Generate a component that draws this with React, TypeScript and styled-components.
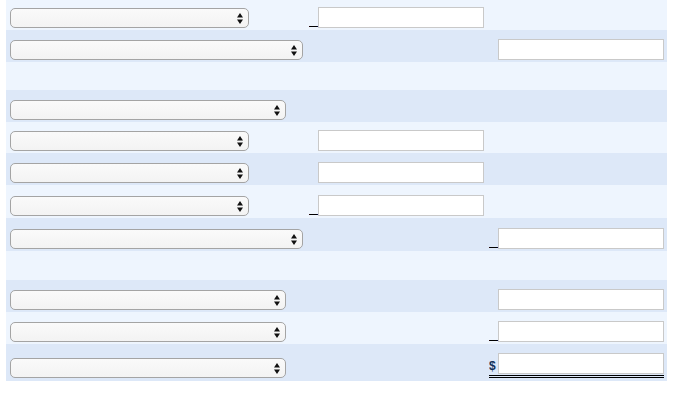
import React from "react";
import styled, { createGlobalStyle } from "styled-components";

const GlobalStyle = createGlobalStyle`
  body {
    margin: 0;
    padding: 0 6px;
    background: #ffffff;
    font-family: "Liberation Sans", Arial, sans-serif;
    font-size: 12px;
    color: #000;
  }
`;

const Table = styled.div`
  width: 661px;
  display: flex;
  flex-direction: column;
`;

const Row = styled.div<{ $alt: boolean; $h: number; $pad: number }>`
  display: grid;
  grid-template-columns: 303px 180px 178px;
  height: ${(p) => p.$h}px;
  box-sizing: border-box;
  padding-bottom: ${(p) => p.$pad}px;
  background: ${(p) => (p.$alt ? "#dde8f8" : "#eef5fe")};
`;

const Cell = styled.div`
  display: flex;
  align-items: flex-end;
`;

const SelectCell = styled(Cell)`
  padding-left: 4px;
`;

const AmountCell = styled.div<{ $total?: boolean }>`
  display: flex;
  align-items: flex-end;
  width: ${(p) => (p.$total ? "175px" : "auto")};
  border-bottom: ${(p) => (p.$total ? "3px double #000" : "none")};
  padding-bottom: ${(p) => (p.$total ? "1px" : "0")};
  align-self: flex-end;
`;

const SelectBox = styled.div<{ $w: number }>`
  width: ${(p) => p.$w}px;
  height: 20px;
  box-sizing: border-box;
  border: 1px solid #a4a4a4;
  border-radius: 5px;
  background: linear-gradient(#fafafa, #f3f3f3);
  display: flex;
  align-items: center;
  justify-content: flex-end;
  padding-right: 5px;
`;

const Mark = styled.span<{ $bold?: boolean }>`
  width: 9px;
  flex: none;
  font-size: ${(p) => (p.$bold ? "12px" : "16px")};
  font-weight: ${(p) => (p.$bold ? 700 : 400)};
  line-height: 1;
  color: ${(p) => (p.$bold ? "#12305a" : "#000")};
  margin-bottom: ${(p) => (p.$bold ? "2px" : "1px")};
  overflow: hidden;
`;

const TextBox = styled.input`
  width: 166px;
  height: 21px;
  box-sizing: border-box;
  margin: 0;
  padding: 0 3px;
  border: 1px solid #c9c9c9;
  background: #ffffff;
  font-family: inherit;
  font-size: 12px;
  outline: none;
`;

function Arrows() {
  return (
    <svg width="6" height="11" viewBox="0 0 6 11">
      <path d="M0 4.5 L3 0 L6 4.5Z M0 6.5 L6 6.5 L3 11Z" fill="#111" />
    </svg>
  );
}

type Amount = { mark: string; total?: boolean };

type Line = {
  h: number;
  select?: number;
  mid?: Amount;
  right?: Amount;
};

const lines: Line[] = [
  { h: 30, select: 239, mid: { mark: "_" } },
  { h: 32, select: 293, right: { mark: "" } },
  { h: 28 },
  { h: 32, select: 276 },
  { h: 31, select: 239, mid: { mark: "" } },
  { h: 32, select: 239, mid: { mark: "" } },
  { h: 33, select: 239, mid: { mark: "_" } },
  { h: 33, select: 293, right: { mark: "_" } },
  { h: 29 },
  { h: 32, select: 276, right: { mark: "" } },
  { h: 32, select: 276, right: { mark: "_" } },
  { h: 37, select: 276, right: { mark: "$", total: true } },
];

function AmountField({ amount }: { amount?: Amount }) {
  if (!amount) return <Cell />;
  return (
    <Cell>
      <AmountCell $total={amount.total}>
        <Mark $bold={amount.mark === "$"}>{amount.mark}</Mark>
        <TextBox type="text" />
      </AmountCell>
    </Cell>
  );
}

export default function App() {
  return (
    <>
      <GlobalStyle />
      <Table>
        {lines.map((line, i) => (
          <Row
            key={i}
            $alt={i % 2 === 1}
            $h={line.h}
            $pad={line.right?.total ? 3 : 2}
          >
            <SelectCell>
              {line.select && (
                <SelectBox $w={line.select}>
                  <Arrows />
                </SelectBox>
              )}
            </SelectCell>
            <AmountField amount={line.mid} />
            <AmountField amount={line.right} />
          </Row>
        ))}
      </Table>
    </>
  );
}
